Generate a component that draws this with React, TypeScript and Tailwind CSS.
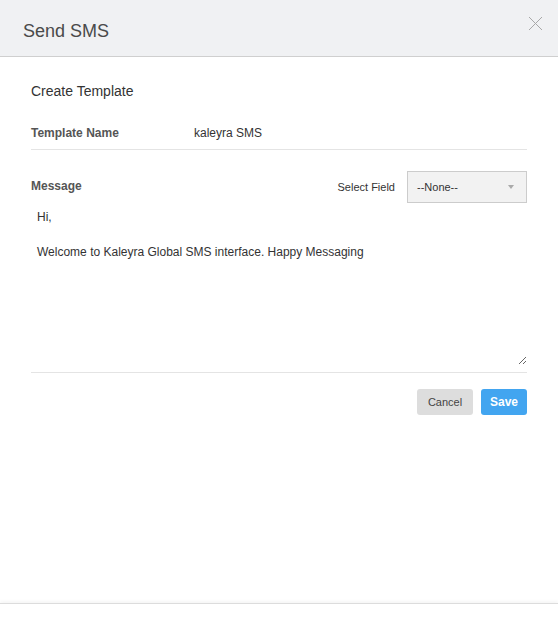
import React from "react";

export default function App() {
  return (
    <div className="flex h-[624px] w-[558px] flex-col bg-white font-['Liberation_Sans',Arial,sans-serif] text-[#333]">
      <div className="flex h-[57px] shrink-0 items-start justify-between border-b border-[#cfcfcf] bg-[#f0f1f3]">
        <div className="pl-[23px] pt-[19px] text-[18px] leading-[24px] text-[#4a4a4a]">Send SMS</div>
        <button className="mr-[15px] mt-[16px] h-[15px] w-[15px]" aria-label="close">
          <svg width="15" height="15" viewBox="0 0 15 15">
            <path d="M1 1L14 14M14 1L1 14" stroke="#a8a8a8" strokeWidth="1" fill="none" />
          </svg>
        </button>
      </div>

      <div className="flex flex-col px-[31px]">
        <div className="pt-[24px] text-[14px] leading-[20px] text-[#333]">Create Template</div>

        <div className="mt-[16px] flex h-[33px] items-center border-b border-[#e4e4e4] text-[12px]">
          <div className="w-[163px] font-bold text-[#555]">Template Name</div>
          <div className="text-[#333]">kaleyra SMS</div>
        </div>

        <div className="flex items-start justify-between pt-[21px]">
          <div className="pt-[7px] text-[12px] font-bold leading-[16px] text-[#555]">Message</div>
          <div className="flex items-center">
            <span className="mr-[12px] pt-[1px] text-[11px] text-[#333]">Select Field</span>
            <div className="flex h-[32px] w-[120px] items-center justify-between border border-[#cccccc] bg-[#f2f2f2] pl-[9px] pr-[12px] text-[11px] text-[#333]">
              <span>--None--</span>
              <svg width="6" height="4" viewBox="0 0 6 4">
                <path d="M0 0H6L3 4Z" fill="#aaaaaa" />
              </svg>
            </div>
          </div>
        </div>

        <textarea
          className="block h-[162px] w-full resize-y px-[6px] py-[6px] text-[12px] leading-[17.5px] text-[#333] outline-none"
          defaultValue={"Hi,\n\nWelcome to Kaleyra Global SMS interface. Happy Messaging"}
        />

        <div className="mt-[7px] border-b border-[#e4e4e4]" />

        <div className="mt-[16px] flex justify-end gap-[8px]">
          <button className="h-[26px] w-[56px] rounded-[3px] bg-[#dddddd] text-[11px] text-[#444]">Cancel</button>
          <button className="h-[26px] w-[46px] rounded-[3px] bg-[#42a5f0] text-[12px] font-bold text-white">Save</button>
        </div>
      </div>

      <div className="flex-1" />
      <div className="h-[21px] shrink-0 border-t border-[#dcdcdc] bg-white shadow-[0_-2px_3px_rgba(0,0,0,0.04)]" />
    </div>
  );
}
